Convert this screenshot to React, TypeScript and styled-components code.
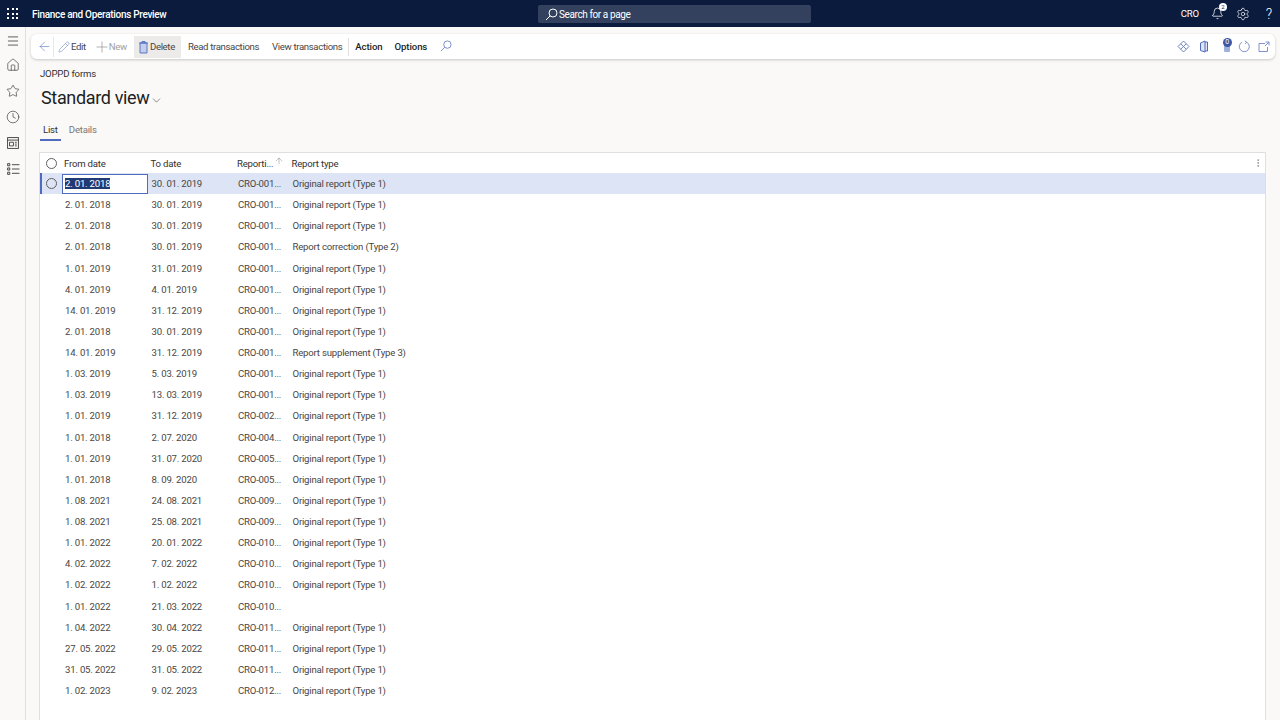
import React from 'react';
import styled, {createGlobalStyle} from 'styled-components';
import {ArrowLeft, ChevronDown, Pencil, Menu, Home, Star, Clock, ArrowUp, Settings, Bell, EllipsisVertical} from 'lucide-react';

const rows = [
	['2. 01. 2018', '30. 01. 2019', 'CRO-001...', 'Original report (Type 1)'],
	['2. 01. 2018', '30. 01. 2019', 'CRO-001...', 'Original report (Type 1)'],
	['2. 01. 2018', '30. 01. 2019', 'CRO-001...', 'Original report (Type 1)'],
	['2. 01. 2018', '30. 01. 2019', 'CRO-001...', 'Report correction (Type 2)'],
	['1. 01. 2019', '31. 01. 2019', 'CRO-001...', 'Original report (Type 1)'],
	['4. 01. 2019', '4. 01. 2019', 'CRO-001...', 'Original report (Type 1)'],
	['14. 01. 2019', '31. 12. 2019', 'CRO-001...', 'Original report (Type 1)'],
	['2. 01. 2018', '30. 01. 2019', 'CRO-001...', 'Original report (Type 1)'],
	['14. 01. 2019', '31. 12. 2019', 'CRO-001...', 'Report supplement (Type 3)'],
	['1. 03. 2019', '5. 03. 2019', 'CRO-001...', 'Original report (Type 1)'],
	['1. 03. 2019', '13. 03. 2019', 'CRO-001...', 'Original report (Type 1)'],
	['1. 01. 2019', '31. 12. 2019', 'CRO-002...', 'Original report (Type 1)'],
	['1. 01. 2018', '2. 07. 2020', 'CRO-004...', 'Original report (Type 1)'],
	['1. 01. 2019', '31. 07. 2020', 'CRO-005...', 'Original report (Type 1)'],
	['1. 01. 2018', '8. 09. 2020', 'CRO-005...', 'Original report (Type 1)'],
	['1. 08. 2021', '24. 08. 2021', 'CRO-009...', 'Original report (Type 1)'],
	['1. 08. 2021', '25. 08. 2021', 'CRO-009...', 'Original report (Type 1)'],
	['1. 01. 2022', '20. 01. 2022', 'CRO-010...', 'Original report (Type 1)'],
	['4. 02. 2022', '7. 02. 2022', 'CRO-010...', 'Original report (Type 1)'],
	['1. 02. 2022', '1. 02. 2022', 'CRO-010...', 'Original report (Type 1)'],
	['1. 01. 2022', '21. 03. 2022', 'CRO-010...', ''],
	['1. 04. 2022', '30. 04. 2022', 'CRO-011...', 'Original report (Type 1)'],
	['27. 05. 2022', '29. 05. 2022', 'CRO-011...', 'Original report (Type 1)'],
	['31. 05. 2022', '31. 05. 2022', 'CRO-011...', 'Original report (Type 1)'],
	['1. 02. 2023', '9. 02. 2023', 'CRO-012...', 'Original report (Type 1)'],
];

const GlobalStyle = createGlobalStyle`
	html, body {
		margin: 0;
		height: 100%;
		overflow: hidden;
	}
	body {
		font-family: 'Roboto', 'Liberation Sans', sans-serif;
		font-size: 9.6px;
		letter-spacing: -0.2px;
		color: #323130;
		background: #faf9f8;
	}
`;

// magnifier with the glass top right and a long handle, as Dynamics draws it
function FindGlyph({size, stroke}: {size: number; stroke: string}) {
	return (
		<svg width={size} height={size} viewBox="0 0 13 13" fill="none" stroke={stroke} strokeWidth="1">
			<circle cx="8" cy="5" r="4" />
			<path d="M5.200 7.800 1 12" />
		</svg>
	);
}

function App() {
	return (
		<Page>
			<GlobalStyle />
			<TopBar>
				<TopLeft>
					<Waffle>
						{Array.from({length: 9}).map((_, i) => (
							<i key={i} />
						))}
					</Waffle>
					<AppName>Finance and Operations Preview</AppName>
				</TopLeft>
				<SearchBox>
					<FindGlyph size={13} stroke="#fff" />
					Search for a page
				</SearchBox>
				<TopRight>
					<span>CRO</span>
					<BellWrap>
						<Bell size={13} strokeWidth={1.4} />
						<BellBadge>2</BellBadge>
					</BellWrap>
					<Settings size={14} strokeWidth={1.2} />
					<Help>?</Help>
				</TopRight>
			</TopBar>
			<Body>
				<Rail>
					<Menu size={14} strokeWidth={1.3} />
					<Home size={14} strokeWidth={1.1} />
					<Star size={14} strokeWidth={1.1} />
					<Clock size={14} strokeWidth={1.1} />
					<svg width="14" height="14" viewBox="0 0 13 13" fill="none" stroke="#323130" strokeWidth="0.8">
						<rect x="1.500" y="1.500" width="10" height="10" />
						<path d="M1.500 3.800h10M3.300 5.800h3.600v3.400H3.300zM8.300 5.800h1.700M8.300 7.500h1.700M8.300 9.200h1.700" />
					</svg>
					<svg width="14" height="14" viewBox="0 0 13 13" fill="none" stroke="#323130" strokeWidth="0.8">
						<path d="M1.500 1.500h2v2h-2zM1.500 5.500h2v2h-2zM1.500 9.500h2v2h-2zM5.500 2.500h7M5.500 6.500h7M5.500 10.500h7" />
					</svg>
				</Rail>
				<Main>
					<Toolbar>
						<BackButton>
							<ArrowLeft size={15} strokeWidth={0.9} />
						</BackButton>
						<Action $offset={4} $gap={1}>
							<Pencil size={12} strokeWidth={0.9} color="#4f6bbd" />
							Edit
						</Action>
						<Action $offset={10} $gap={1} $disabled>
							<svg width="12" height="12" viewBox="0 0 12 12" stroke="#a19f9d" strokeWidth="0.8">
								<path d="M6 .5v11M.5 6h11" />
							</svg>
							New
						</Action>
						<DeleteAction>
							<svg width="11" height="14" viewBox="0 0 11 14" fill="#c5cfea" stroke="#4f6bbd" strokeWidth="0.9">
								<path d="M2 3h7v10H2zM1 3h9M4 3V1.500h3V3" />
							</svg>
							Delete
						</DeleteAction>
						<Action $offset={7}>Read transactions</Action>
						<Action $offset={13}>View transactions</Action>
						<Divider />
						<MenuItem $offset={6}>Action</MenuItem>
						<MenuItem $offset={12}>Options</MenuItem>
						<FindIcon>
							<FindGlyph size={12} stroke="#7186c8" />
						</FindIcon>
						<ToolbarRight>
							<svg width="13" height="13" viewBox="0 0 13 13" fill="none" stroke="#7186c8" strokeWidth="1">
								<path d="M6.500 1 12 6.500 6.500 12 1 6.500zM3.700 3.800 9.200 9.200M9.200 3.800 3.700 9.200" />
							</svg>
							<PhoneIcon width="10" height="13" viewBox="0 0 10 13" fill="#dfe5f5" stroke="#4f6bbd" strokeWidth="1">
								<path d="M1.500 3 6 1v11l-4.500-1.500zM6 2h2.500v9H6" />
							</PhoneIcon>
							<CountWrap>
								<svg width="8" height="13" viewBox="0 0 8 13">
									<rect x="1" y="1" width="6" height="11" rx="1" fill="#9fb0de" />
								</svg>
								<CountBadge>0</CountBadge>
							</CountWrap>
							<svg width="13" height="13" viewBox="0 0 13 13" fill="none" stroke="#7186c8" strokeWidth="0.9">
								<path d="M8.800 2.300A5 5 0 1 1 4 2.200M8.800 2.300 6.800 .8M8.800 2.300 7 3.800" />
							</svg>
							<svg width="12" height="12" viewBox="0 0 12 12" fill="none" stroke="#7186c8" strokeWidth="0.9">
								<path d="M7 2.500H1v8h8.500V6M7.500 1h3.500v3.500M11 1 7 5" />
							</svg>
						</ToolbarRight>
					</Toolbar>
					<Breadcrumb>JOPPD forms</Breadcrumb>
					<TitleRow>
						<Title>Standard view</Title>
						<TitleChevron size={13} strokeWidth={1} />
					</TitleRow>
					<Tabs>
						<Tab $active>List</Tab>
						<Tab>Details</Tab>
					</Tabs>
					<Grid>
						<HeaderRow>
							<CheckCell>
								<Radio />
							</CheckCell>
							<HeadCell>From date</HeadCell>
							<HeadCell>To date</HeadCell>
							<HeadCell>
								Reporti...
								<SortIcon>
									<ArrowUp size={10} strokeWidth={0.9} />
								</SortIcon>
							</HeadCell>
							<HeadCell>Report type</HeadCell>
							<MoreCell>
								<EllipsisVertical size={10} strokeWidth={1.2} />
							</MoreCell>
						</HeaderRow>
						{rows.map((r, i) => (
							<Row key={i} $selected={i === 0}>
								<CheckCell>{i === 0 && <Radio />}</CheckCell>
								{i === 0 ? (
									<InputCell>
										<mark>{r[0]}</mark>
									</InputCell>
								) : (
									<Cell>{r[0]}</Cell>
								)}
								<Cell>{r[1]}</Cell>
								<Cell>{r[2]}</Cell>
								<Cell>{r[3]}</Cell>
							</Row>
						))}
					</Grid>
				</Main>
			</Body>
		</Page>
	);
}

export default App;

const columns = '22px 86.500px 86.500px 54.500px 1fr 14px';

const Page = styled.div`
	display: flex;
	flex-direction: column;
	width: 1280px;
	height: 720px;
	overflow: hidden;
`;

const TopBar = styled.header`
	display: grid;
	grid-template-columns: 538px 273px 1fr;
	align-items: center;
	height: 27px;
	flex: none;
	background: #0a1b3d;
	color: #fff;
`;

const TopLeft = styled.div`
	display: flex;
	align-items: center;
	gap: 14px;
	padding-left: 7px;
`;

const Waffle = styled.div`
	display: grid;
	grid-template-columns: repeat(3, 2px);
	gap: 2.500px;
	i {
		width: 2px;
		height: 2px;
		background: #fff;
	}
`;

const AppName = styled.span`
	margin-top: 1px;
	font-size: 10px;
	font-weight: 500;
	letter-spacing: -0.3px;
`;

const SearchBox = styled.div`
	display: flex;
	align-items: center;
	gap: 1px;
	height: 18px;
	margin-top: 1px;
	padding-left: 7px;
	border-radius: 2px;
	background: #33415f;
	font-size: 10px;
	letter-spacing: -0.4px;
`;

const TopRight = styled.div`
	display: flex;
	align-items: center;
	justify-content: flex-end;
	gap: 12px;
	padding-right: 8px;
`;

const BellWrap = styled.div`
	position: relative;
	display: flex;
`;

const BellBadge = styled.span`
	position: absolute;
	top: -4px;
	right: -3px;
	width: 8px;
	height: 8px;
	border-radius: 50%;
	background: #fff;
	color: #0a1b3d;
	font-size: 6px;
	line-height: 8px;
	text-align: center;
`;

const Help = styled.span`
	font-size: 14px;
	font-weight: 300;
	margin-left: 4px;
`;

const Body = styled.div`
	display: flex;
	flex: 1;
	min-height: 0;
`;

const Rail = styled.nav`
	display: flex;
	flex-direction: column;
	align-items: center;
	gap: 12px;
	width: 26px;
	flex: none;
	padding-top: 7px;
	box-sizing: border-box;
	border-right: 1px solid #e1dfdd;
	background: #faf9f8;
	color: #323130;
	svg:first-child {
		margin-bottom: -2px;
	}
`;

const Main = styled.main`
	flex: 1;
	min-width: 0;
	padding: 7px 5px 0 5px;
`;

const Toolbar = styled.div`
	display: flex;
	align-items: center;
	height: 25px;
	border-radius: 6px;
	background: #fff;
	box-shadow: 0 1px 3px rgba(0, 0, 0, 0.2);
	letter-spacing: -0.35px;
`;

const BackButton = styled.button`
	display: flex;
	align-items: center;
	justify-content: flex-end;
	width: 23px;
	height: 20px;
	padding: 0 1px 0 0;
	border: 0;
	border-right: 1px solid #e8e7e6;
	background: none;
	color: #4f6bbd;
`;

const Action = styled.div<{$disabled?: boolean; $offset?: number; $gap?: number}>`
	display: flex;
	align-items: center;
	gap: ${(props) => props.$gap ?? 0}px;
	margin-left: ${(props) => props.$offset ?? 0}px;
	white-space: nowrap;
	color: ${(props) => (props.$disabled ? '#a19f9d' : '#484644')};
`;

const DeleteAction = styled.div`
	display: flex;
	align-items: center;
	gap: 1px;
	height: 22px;
	margin-left: 7px;
	padding: 0 6px 0 4px;
	background: #edebe9;
	color: #484644;
`;

const Divider = styled.div`
	width: 1px;
	height: 18px;
	margin-left: 6px;
	background: #e1dfdd;
`;

const MenuItem = styled.div<{$offset: number}>`
	margin-left: ${(props) => props.$offset}px;
	color: #201f1e;
	font-weight: 500;
	letter-spacing: -0.1px;
`;

const FindIcon = styled.div`
	display: flex;
	margin-left: 13px;
	margin-top: -2px;
`;

const ToolbarRight = styled.div`
	display: flex;
	align-items: center;
	gap: 8px;
	margin-left: auto;
	padding-right: 5px;
	svg:last-child {
		margin-left: -1px;
	}
`;

const PhoneIcon = styled.svg`
	margin-left: 1px;
`;

const CountWrap = styled.div`
	position: relative;
	display: flex;
	margin-left: 6px;
	margin-right: -0.500px;
`;

const CountBadge = styled.span`
	position: absolute;
	top: -2px;
	left: 0;
	width: 9px;
	height: 9px;
	border-radius: 50%;
	background: #3b57a6;
	color: #fff;
	font-size: 7px;
	line-height: 9px;
	text-align: center;
`;

const Breadcrumb = styled.div`
	margin: 7.500px 0 0 9px;
	line-height: 14px;
`;

const TitleRow = styled.div`
	display: flex;
	align-items: center;
	gap: 1px;
	margin: 4.500px 0 0 10px;
	height: 26px;
`;

const TitleChevron = styled(ChevronDown)`
	margin-top: 4px;
`;

const Title = styled.h1`
	margin: 0;
	font-size: 18px;
	font-weight: 400;
	line-height: 26px;
	letter-spacing: -0.35px;
	color: #201f1e;
`;

const Tabs = styled.div`
	display: flex;
	gap: 5px;
	margin: 11px 0 0 9px;
`;

const Tab = styled.div<{$active?: boolean}>`
	padding: 0 3px 2px;
	line-height: 15px;
	color: ${(props) => (props.$active ? '#323130' : '#797775')};
	border-bottom: 2px solid ${(props) => (props.$active ? '#4f6bbd' : 'transparent')};
`;

const Grid = styled.section`
	margin: 11px 9px 0 8px;
	height: 600px;
	border: 1px solid #e1dfdd;
	background: #fff;
`;

const HeaderRow = styled.div`
	display: grid;
	grid-template-columns: ${columns};
	align-items: center;
	height: 20px;
	color: #323130;
`;

const Row = styled.div<{$selected?: boolean}>`
	display: grid;
	grid-template-columns: ${columns};
	align-items: center;
	height: 21.125px;
	background: ${(props) => (props.$selected ? '#dce4f5' : 'transparent')};
	box-shadow: ${(props) => (props.$selected ? 'inset 2px 0 0 #4f6bbd' : 'none')};
`;

const CheckCell = styled.div`
	display: flex;
	align-items: center;
	justify-content: center;
	height: 100%;
`;

const Radio = styled.span`
	width: 9px;
	height: 9px;
	border: 1px solid #605e5c;
	border-radius: 50%;
`;

const HeadCell = styled.div`
	position: relative;
	padding-left: 2px;
	white-space: nowrap;
`;

const SortIcon = styled.span`
	position: absolute;
	top: -2px;
	left: 39px;
	color: #605e5c;
`;

const MoreCell = styled.div`
	display: flex;
	justify-content: center;
	color: #605e5c;
`;

const Cell = styled.div`
	padding-left: 3px;
	white-space: nowrap;
	color: #484644;
`;

const InputCell = styled.div`
	display: flex;
	align-items: center;
	height: 18px;
	margin-right: 1px;
	padding-left: 2px;
	border: 1px solid #4f6bbd;
	background: #fff;
	mark {
		background: #1f3a75;
		color: #fff;
	}
`;
